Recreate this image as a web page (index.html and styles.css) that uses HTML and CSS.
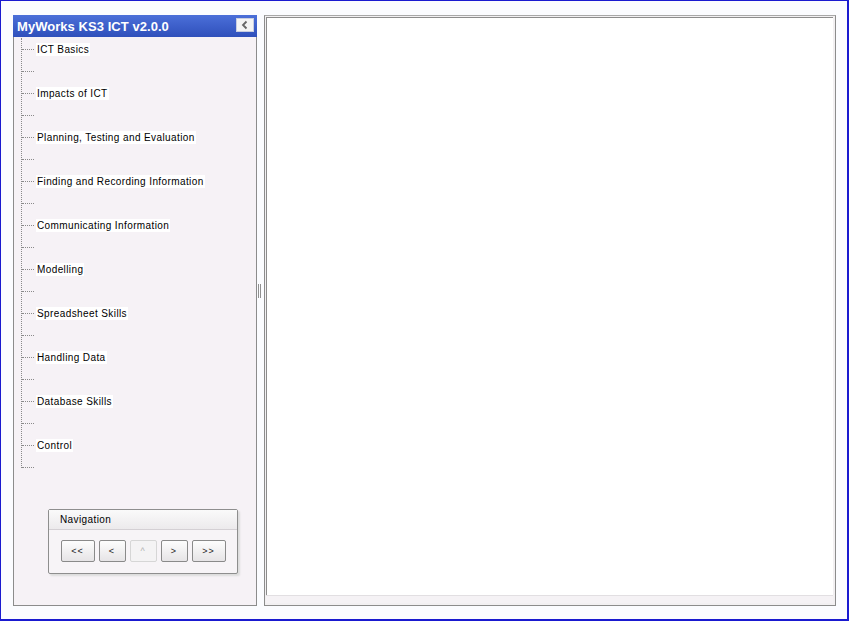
FILE: index.html
```html
<!DOCTYPE html>
<html lang="en">
<head>
  <meta charset="UTF-8">
  <title>MyWorks KS3 ICT v2.0.0</title>
  <link rel="stylesheet" href="styles.css">
</head>
<body>
  <div class="frame">
    <div class="side">
      <div class="side-head">
        <span class="side-title">MyWorks KS3 ICT v2.0.0</span>
        <div class="collapse">
          <svg width="10" height="10" viewBox="0 0 10 10">
            <path d="M6.5 1.5L3 5l3.5 3.5" fill="none" stroke="#666" stroke-width="1.8"/>
          </svg>
        </div>
      </div>
      <div class="side-body">
        <ul class="tree">
          <li><span>ICT Basics</span></li>
          <li></li>
          <li><span>Impacts of ICT</span></li>
          <li></li>
          <li><span>Planning, Testing and Evaluation</span></li>
          <li></li>
          <li><span>Finding and Recording Information</span></li>
          <li></li>
          <li><span>Communicating Information</span></li>
          <li></li>
          <li><span>Modelling</span></li>
          <li></li>
          <li><span>Spreadsheet Skills</span></li>
          <li></li>
          <li><span>Handling Data</span></li>
          <li></li>
          <li><span>Database Skills</span></li>
          <li></li>
          <li><span>Control</span></li>
          <li class="last"></li>
        </ul>

        <div class="nav-box">
          <div class="nav-head">Navigation</div>
          <div class="nav-buttons">
            <button class="btn wide">&lt;&lt;</button>
            <button class="btn">&lt;</button>
            <button class="btn disabled">^</button>
            <button class="btn">&gt;</button>
            <button class="btn wide">&gt;&gt;</button>
          </div>
        </div>
      </div>
    </div>

    <div class="splitter">
      <div class="grip"></div>
    </div>

    <div class="main">
      <div class="main-inner"></div>
      <div class="main-foot"></div>
    </div>
  </div>
</body>
</html>
```

FILE: styles.css
```css
body {
  margin: 0;
  font-family: "Liberation Sans", Arial, sans-serif;
  background-color: #fff;
}

.frame {
  width: 849px;
  height: 621px;
  box-sizing: border-box;
  border: 2px solid #1a1ad0;
  border-top-width: 1px;
  border-left-width: 1px;
  background-color: #fbfcff;
  padding: 14px 11px 13px 12px;
  display: flex;
}

/* Left panel */
.side {
  width: 244px;
  box-sizing: border-box;
  border: 1px solid #8c8c8c;
  border-top: none;
  display: flex;
  flex-direction: column;
  background-color: #f6f2f6;
}

.side-head {
  height: 22px;
  background: linear-gradient(#4b6fd9, #2f50bb);
  display: flex;
  align-items: center;
  justify-content: space-between;
  padding: 0 3px 0 4px;
  margin: 0 -1px;
}

.side-title {
  color: #fff;
  font-weight: bold;
  font-size: 13px;
  letter-spacing: 0.05px;
}

.collapse {
  width: 18px;
  height: 14px;
  background-color: #f4f4f4;
  border: 1px solid #c8cde0;
  box-sizing: border-box;
  display: flex;
  align-items: center;
  justify-content: center;
  margin-top: -2px;
}

.side-body {
  flex: 1;
  padding-top: 1px;
}

.tree {
  list-style: none;
  margin: 0 0 0 7px;
  padding: 0;
  border-left: 1px dotted #8a8a8a;
}

.tree li {
  height: 22px;
  display: flex;
  align-items: center;
  font-size: 10px;
  letter-spacing: 0.4px;
  color: #000;
}

.tree li.last {
  height: 12px;
  align-items: flex-end;
}

.tree li::before {
  content: "";
  width: 12px;
  border-top: 1px dotted #8a8a8a;
  margin-right: 2px;
}

.tree li span {
  background-color: #fff;
  padding: 1px 1px;
}

/* Navigation box */
.nav-box {
  width: 190px;
  margin: 41px 0 0 34px;
  box-sizing: border-box;
  border: 1px solid #8e8e8e;
  border-radius: 2px;
  background-color: #f7f4f7;
  box-shadow: 2px 2px 2px #dcdcdc;
}

.nav-head {
  height: 19px;
  line-height: 20px;
  font-size: 10px;
  letter-spacing: 0.4px;
  padding-left: 11px;
  background: linear-gradient(#fafafa, #eceaec);
  border-bottom: 1px solid #d4d0d4;
}

.nav-buttons {
  display: flex;
  justify-content: center;
  gap: 4px;
  padding: 10px 0 11px;
}

.btn {
  width: 27px;
  height: 22px;
  padding: 0;
  font-family: "Liberation Sans", Arial, sans-serif;
  font-size: 9px;
  letter-spacing: 1px;
  color: #222;
  background: linear-gradient(#fdfdfd, #e6e4e6);
  border: 1px solid #8a8a8a;
  border-radius: 2px;
}

.btn.wide {
  width: 34px;
}

.btn.disabled {
  color: #b0b0b0;
  border-color: #d6d6d6;
  background: #f4f3f4;
}

/* Splitter */
.splitter {
  width: 7px;
  display: flex;
  align-items: center;
  justify-content: center;
}

.grip {
  width: 1px;
  height: 14px;
  border-left: 1px solid #909090;
  border-right: 1px solid #909090;
  margin: 0 0 40px -2px;
}

/* Main content */
.main {
  flex: 1;
  box-sizing: border-box;
  border: 1px solid #8c8c8c;
  border-top-color: #a8a8a8;
  padding: 1px 2px 2px 1px;
  display: flex;
  flex-direction: column;
  background-color: #f2f0f2;
}

.main-inner {
  flex: 1;
  background-color: #fff;
  border-top: 1px solid #8c8c8c;
  border-left: 1px solid #8c8c8c;
}

.main-foot {
  height: 7px;
  background-color: #f5f2f5;
  border-top: 1px solid #e2dfe2;
}
```
